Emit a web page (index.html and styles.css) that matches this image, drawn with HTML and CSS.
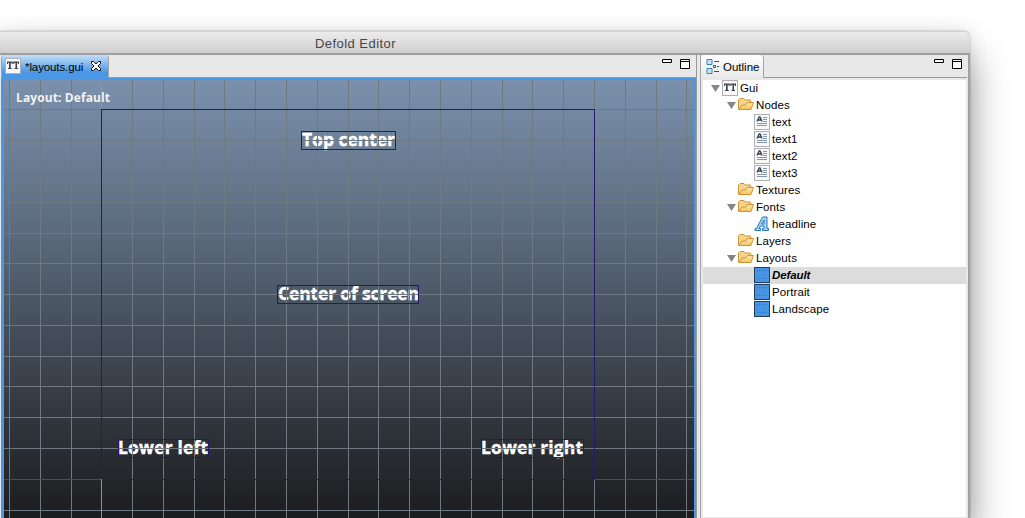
FILE: index.html
```html
<!DOCTYPE html>
<html lang="en">
<head>
<meta charset="utf-8">
<title>Defold Editor</title>
<link rel="stylesheet" href="styles.css">
</head>
<body>
<svg class="defs" width="0" height="0" aria-hidden="true">
  <defs>
    <linearGradient id="folderFill" x2="0" y2="1"><stop stop-color="#ffe9ad"/><stop offset="1" stop-color="#f2c35f"/></linearGradient>
    <symbol id="tt" viewBox="0 0 16 16"><rect x=".5" y=".5" width="15" height="15" fill="#f9f9f9" stroke="#b0b0b0"/><path d="M2 3.500h5.700v2.600h-.8L6.200 4.700H5.700V10h1v1H3v-1h1V4.700h-.7L2.800 6.100H2zM8.300 3.500H14v2.600h-.8l-.5-1.400H12V10h1v1H9.500v-1h1V4.700h-.7l-.7 1.400h-.8z" fill="#38424f"/></symbol>
    <symbol id="folder" viewBox="0 0 16 16"><path d="M.5 12V3L2 1.500h4L7.500 3h5L13 5.500" fill="#f6d48a" stroke="#cf9239"/><path d="M.7 12.500L4 8h3.500L9.500 5.500h6L13 12.500z" fill="url(#folderFill)" stroke="#cf9239"/></symbol>
    <symbol id="label" viewBox="0 0 16 16"><rect x=".5" y=".5" width="15" height="15" fill="#f9f9f9" stroke="#b0b0b0"/><path d="M3 7.500L5.200 3h.8L8 7.500M4 6h3" fill="none" stroke="#34404d" stroke-width="1.300"/><path d="M9 3.500h4M9 5.500h4M9 7.500h4M3 9.500h10M3 11.500h10" stroke="#8296ad"/></symbol>
    <symbol id="font" viewBox="0 0 16 16"><path d="M1 14.500v-2h1.500L8.500 1H13v11.500h1.500v2h-6v-2H10V10H6.500L5 12.500h1.500v2zM7.500 8H10V4z" fill="#a5d6f7" stroke="#2877b8" fill-rule="evenodd"/></symbol>
    <symbol id="layout" viewBox="0 0 16 16"><rect x=".5" y=".5" width="15" height="15" fill="#4794e2" stroke="#253d58"/><path d="M3 3.500h10M3 11.500h10" stroke="#3478bd" stroke-dasharray="1 1"/></symbol>
    <symbol id="outline" viewBox="0 0 14 16"><path d="M1 1.500h5v5H1zM1 10.500h5v5H1z" fill="#c9e6f8" stroke="#3182bd"/><path d="M8 3.500h5M11 8.500h2M8 13.500h5" stroke="#17599a"/><path d="M7.500 7.500h2v2h-2z" fill="#fff" stroke="#17599a"/></symbol>
    <symbol id="winbtns" viewBox="0 0 28 12"><path d="M.5 1.500h9v3h-9z" fill="#fff" stroke="#000"/><path d="M18.500 1.500h9v9h-9zM18.500 3.500h9" fill="#fff" stroke="#000"/></symbol>
  </defs>
</svg>
<div class="window">
  <header class="titlebar"><span class="title">Defold Editor</span></header>
  <div class="workbench">
    <section class="editor">
      <div class="tabs">
        <div class="tab active"><svg class="icon"><use href="#tt"/></svg><span class="tab-name">*layouts.gui</span>
          <svg class="close" viewBox="0 0 12 12"><path d="M1.500 1.500h2L6 4l2.500-2.500h2v2L8 6l2.500 2.500v2h-2L6 8l-2.500 2.500h-2v-2L4 6 1.500 3.500z" fill="#fff" stroke="#111"/></svg></div>
        <svg class="winbtns"><use href="#winbtns"/></svg>
      </div>
      <svg class="scene" viewBox="4 80 690 438">
        <defs><linearGradient id="sky" x2="0" y2="1"><stop stop-color="#7a90ac"/><stop offset=".25" stop-color="#65768b"/><stop offset=".5" stop-color="#4b5765"/><stop offset=".75" stop-color="#333941"/><stop offset="1" stop-color="#1b1c1e"/></linearGradient></defs>
        <rect x="4" y="80" width="690" height="438" fill="url(#sky)"/>
        <g class="labels">
          <text x="302" y="146" textLength="93">Top center</text>
          <text x="278" y="300" textLength="141">Center of screen</text>
          <text x="118" y="454" textLength="90">Lower left</text>
          <text x="481" y="454" textLength="102">Lower right</text>
        </g>
        <path class="grid" d="M9.500 80v438M40.500 80v438M71.500 80v438M101.500 80v438M132.500 80v438M163.500 80v438M194.500 80v438M224.500 80v438M255.500 80v438M286.500 80v438M317.500 80v438M348.500 80v438M378.500 80v438M409.500 80v438M440.500 80v438M471.500 80v438M502.500 80v438M532.500 80v438M563.500 80v438M594.500 80v438M625.500 80v438M656.500 80v438M686.500 80v438"/>
        <path class="grid" d="M4 109.500h690M4 140.500h690M4 171.500h690M4 202.500h690M4 233.500h690M4 263.500h690M4 294.500h690M4 325.500h690M4 356.500h690M4 386.500h690M4 417.500h690M4 448.500h690M4 479.500h690M4 510.500h690"/>
        <g class="bounds"><rect x="101.500" y="109.500" width="493" height="370"/><rect x="301.500" y="131.500" width="94" height="18"/><rect x="277.500" y="285.500" width="141" height="18"/><rect x="118.500" y="439.500" width="90" height="18"/><rect x="481.500" y="439.500" width="102" height="18"/></g>
        <path d="M101.500 80v29M101.500 479v39" stroke="#18e818"/><path d="M4 479.500h97M595 479.500h99" stroke="#e01010"/>
        <text class="caption" x="16" y="102" textLength="94">Layout: Default</text>
      </svg>
    </section>
    <section class="outline">
      <div class="tabs">
        <div class="tab"><svg class="outline-icon"><use href="#outline"/></svg><span class="tab-name">Outline</span></div>
        <svg class="winbtns"><use href="#winbtns"/></svg>
      </div>
      <ul class="tree">
        <li class="row"><i class="arrow"></i><svg class="icon"><use href="#tt"/></svg><span>Gui</span></li>
        <li class="row l1"><i class="arrow"></i><svg class="icon"><use href="#folder"/></svg><span>Nodes</span></li>
        <li class="row l2"><svg class="icon"><use href="#label"/></svg><span>text</span></li>
        <li class="row l2"><svg class="icon"><use href="#label"/></svg><span>text1</span></li>
        <li class="row l2"><svg class="icon"><use href="#label"/></svg><span>text2</span></li>
        <li class="row l2"><svg class="icon"><use href="#label"/></svg><span>text3</span></li>
        <li class="row l1 leaf"><svg class="icon"><use href="#folder"/></svg><span>Textures</span></li>
        <li class="row l1"><i class="arrow"></i><svg class="icon"><use href="#folder"/></svg><span>Fonts</span></li>
        <li class="row l2"><svg class="icon"><use href="#font"/></svg><span>headline</span></li>
        <li class="row l1 leaf"><svg class="icon"><use href="#folder"/></svg><span>Layers</span></li>
        <li class="row l1"><i class="arrow"></i><svg class="icon"><use href="#folder"/></svg><span>Layouts</span></li>
        <li class="row l2 selected"><svg class="icon"><use href="#layout"/></svg><span>Default</span></li>
        <li class="row l2"><svg class="icon"><use href="#layout"/></svg><span>Portrait</span></li>
        <li class="row l2"><svg class="icon"><use href="#layout"/></svg><span>Landscape</span></li>
      </ul>
    </section>
  </div>
</div>
</body>
</html>
```
FILE: styles.css
```css
* { box-sizing: border-box; }
body { margin: 0; height: 518px; padding-top: 31px; overflow: hidden; background: #fff; font: 11.5px "Liberation Sans", Arial, sans-serif; color: #000; }
svg { display: block; flex: none; }
.defs { position: absolute; }
.window { width: 970px; height: 487px; display: flex; flex-direction: column; border-radius: 0 6px 0 0; background: #e8e8e8; box-shadow: 0 24px 38px rgba(0,0,0,.42), 0 0 20px rgba(0,0,0,.08), 0 0 2px rgba(0,0,0,.3); }
.titlebar { height: 24px; flex: none; padding: 4px 0 0 315px; border-top: 1px solid #d2d2d2; border-bottom: 2px solid #9f9f9f; border-radius: 0 6px 0 0; background: linear-gradient(#ececec, #cfcfcf); }
.title { display: block; font-size: 13px; line-height: 16px; color: #464646; letter-spacing: .45px; }
.workbench { flex: 1; min-height: 0; display: flex; gap: 3px; padding-right: 1px; border-right: 2px solid #a2a2a2; }
.editor { width: 697px; display: flex; flex-direction: column; border-left: 1px solid #e8e8e8; border-right: 1px solid #999; }
.tabs { height: 23px; flex: none; display: flex; justify-content: space-between; border-bottom: 1px solid #999; }
.tab { display: flex; align-items: center; height: 23px; padding-bottom: 2px; border: 1px solid #a3a3a3; border-width: 0 1px 0 1px; border-radius: 4px 4px 0 0; }
.tab.active { width: 108px; padding-left: 3px; background: linear-gradient(#c3dff8, #4a97e5 75%); }
.icon { width: 16px; height: 16px; }
.tab.active .tab-name { width: 69px; padding-left: 4px; letter-spacing: -.1px; white-space: nowrap; }
.tab-name { padding-top: 2px; }
.close { width: 12px; height: 12px; }
.winbtns { width: 28px; height: 12px; margin: 3px 6px 0 0; }
.outline .winbtns { margin-right: 5px; }
.scene { width: 695px; height: 440px; padding: 2px 2px 0 3px; background: #4a97e5; }
.grid { fill: none; stroke: #70797f; }
.bounds { fill: none; stroke: #27196e; }
.labels { fill: #fff; stroke: #fff; stroke-width: .4px; font: bold 17.5px "Open Sans", sans-serif; }
.caption { fill: #f2f2f2; font: bold 12px "Open Sans", sans-serif; }
.outline { flex: 1; display: flex; flex-direction: column; border-left: 1px solid #a3a3a3; }
.outline .tab { width: 63px; padding-left: 5px; border-left: 0; background: linear-gradient(#fff, #e8e8e8); }
.outline-icon { width: 14px; height: 16px; margin-right: 3px; }
.tree { flex: none; height: 437px; margin: 2px 1px 0 2px; padding: 0; list-style: none; background: #fff; }
.row { height: 17px; display: flex; align-items: center; padding-left: 8px; letter-spacing: .1px; }
.row span { padding-left: 2px; line-height: 17px; }
.row .icon { margin-bottom: 1px; }
.l1 { padding-left: 24px; }
.l2 { padding-left: 51px; }
.leaf { padding-left: 35px; }
.arrow { width: 9px; height: 7px; margin-right: 2px; background: #858585; clip-path: polygon(0 0, 100% 0, 50% 100%); }
.selected { background: #dcdcdc; font-weight: bold; font-style: italic; letter-spacing: -.1px; }
```
